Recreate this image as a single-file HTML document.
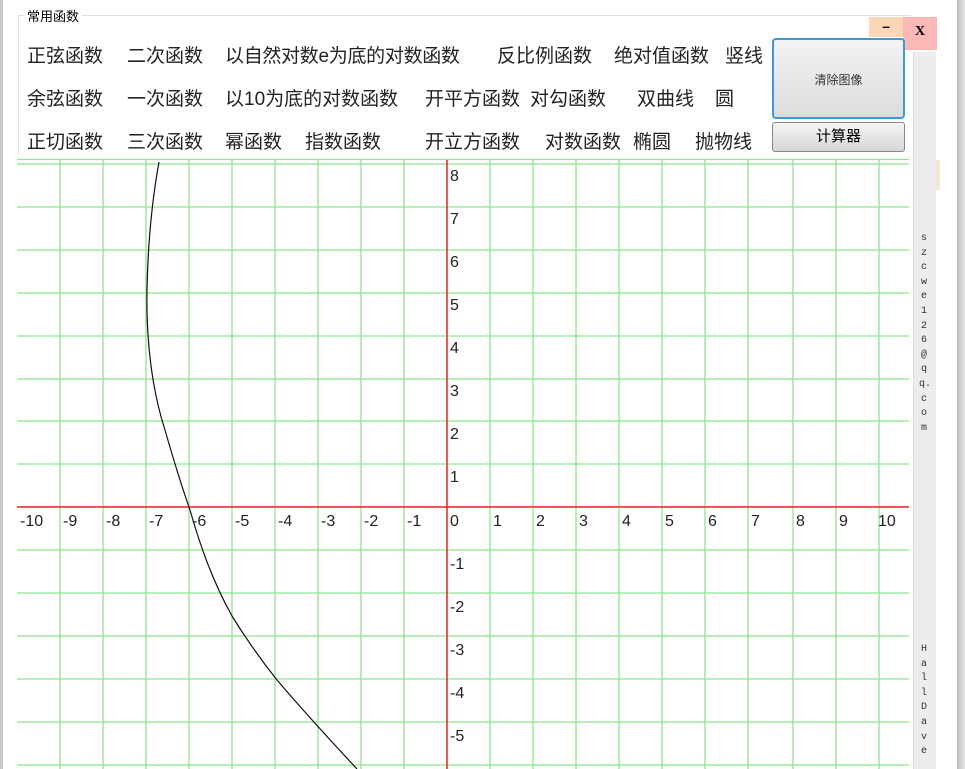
<!DOCTYPE html>
<html><head><meta charset="utf-8"><style>
body{margin:0;width:965px;height:769px;overflow:hidden;background:#fff;position:relative;font-family:"Liberation Sans","Noto Sans CJK SC",sans-serif}
.a{position:absolute}
.t{position:absolute;font-size:19px;color:#222;white-space:nowrap;font-family:"Liberation Sans","Noto Sans CJK SC",sans-serif;line-height:22px}
</style></head><body>
<div class="a" style="left:0;top:0;width:3px;height:769px;background:#c8c8c8"></div>
<div class="a" style="left:957px;top:0;width:8px;height:769px;background:linear-gradient(90deg,#bbb,#e8e8e8)"></div>
<div class="a" style="left:18px;top:15px;width:893px;height:1px;background:#e2e2e2"></div>
<div class="a" style="left:18px;top:15px;width:1px;height:140px;background:#e2e2e2"></div>
<div class="a" style="left:24px;top:6px;font-size:13px;background:#fff;padding:0 3px;font-family:'Noto Sans CJK SC',sans-serif">常用函数</div>
<div class="a" style="left:869px;top:17px;width:34px;height:20px;background:#fcd7b6;text-align:center;font-size:14px;font-weight:bold;line-height:18px">–</div>
<div class="a" style="left:903px;top:17px;width:34px;height:33px;background:#fbb8b4;text-align:center;font:bold 14px 'Liberation Serif',serif;line-height:30px">X</div>
<div class="a" style="left:913px;top:52px;width:22px;height:717px;background:#ededed;border-left:1px solid #ddd"></div>
<div class="a" style="left:936px;top:160px;width:4px;height:30px;background:#f3e6d0"></div>
<div class="a" style="left:919px;top:232px;width:10px;font:10px 'Liberation Mono',monospace;line-height:14.6px;color:#333;text-align:center;word-break:break-all">szcwe126@qq.com</div>
<div class="a" style="left:919px;top:643px;width:10px;font:10px 'Liberation Mono',monospace;line-height:14.6px;color:#333;text-align:center;word-break:break-all">Hall Dave</div>
<div class="a" style="left:772px;top:38px;width:129px;height:77px;border:2px solid #3c9ad8;border-radius:4px;background:linear-gradient(#f3f3f3,#dcdcdc);text-align:center;font-size:12px;line-height:80px;font-family:'Noto Sans CJK SC',sans-serif;color:#333">清除图像</div>
<div class="a" style="left:772px;top:122px;width:131px;height:28px;border:1px solid #888;border-radius:3px;background:linear-gradient(#f6f6f6,#d6d6d6);text-align:center;font-size:15px;line-height:26px;font-family:'Noto Sans CJK SC',sans-serif">计算器</div>

<div class="t" style="left:27px;top:46px">正弦函数</div>
<div class="t" style="left:127px;top:46px">二次函数</div>
<div class="t" style="left:225px;top:46px;letter-spacing:-0.3px">以自然对数e为底的对数函数</div>
<div class="t" style="left:497px;top:46px">反比例函数</div>
<div class="t" style="left:614px;top:46px">绝对值函数</div>
<div class="t" style="left:725px;top:46px">竖线</div>

<div class="t" style="left:27px;top:89px">余弦函数</div>
<div class="t" style="left:127px;top:89px">一次函数</div>
<div class="t" style="left:225px;top:89px">以10为底的对数函数</div>
<div class="t" style="left:425px;top:89px">开平方函数</div>
<div class="t" style="left:530px;top:89px">对勾函数</div>
<div class="t" style="left:637px;top:89px">双曲线</div>
<div class="t" style="left:715px;top:89px">圆</div>

<div class="t" style="left:27px;top:132px">正切函数</div>
<div class="t" style="left:127px;top:132px">三次函数</div>
<div class="t" style="left:225px;top:132px">幂函数</div>
<div class="t" style="left:305px;top:132px">指数函数</div>
<div class="t" style="left:425px;top:132px">开立方函数</div>
<div class="t" style="left:545px;top:132px">对数函数</div>
<div class="t" style="left:633px;top:132px">椭圆</div>
<div class="t" style="left:695px;top:132px">抛物线</div>

<svg class="a" style="left:0;top:0" width="965" height="769">
<g stroke="#8fe68f" stroke-width="1.3">
<line x1="17" y1="159.5" x2="909" y2="159.5"/>
<line x1="17" y1="164" x2="909" y2="164"/><line x1="17" y1="207" x2="909" y2="207"/><line x1="17" y1="250" x2="909" y2="250"/><line x1="17" y1="293" x2="909" y2="293"/><line x1="17" y1="336" x2="909" y2="336"/><line x1="17" y1="379" x2="909" y2="379"/><line x1="17" y1="421" x2="909" y2="421"/><line x1="17" y1="464" x2="909" y2="464"/><line x1="17" y1="550" x2="909" y2="550"/><line x1="17" y1="593" x2="909" y2="593"/><line x1="17" y1="636" x2="909" y2="636"/><line x1="17" y1="679" x2="909" y2="679"/><line x1="17" y1="722" x2="909" y2="722"/><line x1="17" y1="765" x2="909" y2="765"/>
<line x1="60" y1="160" x2="60" y2="769"/><line x1="103" y1="160" x2="103" y2="769"/><line x1="146" y1="160" x2="146" y2="769"/><line x1="189" y1="160" x2="189" y2="769"/><line x1="232" y1="160" x2="232" y2="769"/><line x1="275" y1="160" x2="275" y2="769"/><line x1="318" y1="160" x2="318" y2="769"/><line x1="361" y1="160" x2="361" y2="769"/><line x1="404" y1="160" x2="404" y2="769"/><line x1="490" y1="160" x2="490" y2="769"/><line x1="533" y1="160" x2="533" y2="769"/><line x1="576" y1="160" x2="576" y2="769"/><line x1="619" y1="160" x2="619" y2="769"/><line x1="662" y1="160" x2="662" y2="769"/><line x1="705" y1="160" x2="705" y2="769"/><line x1="748" y1="160" x2="748" y2="769"/><line x1="793" y1="160" x2="793" y2="769"/><line x1="836" y1="160" x2="836" y2="769"/><line x1="879" y1="160" x2="879" y2="769"/>
</g>
<line x1="17" y1="507" x2="909" y2="507" stroke="#e82020" stroke-width="1.5"/>
<line x1="447" y1="160" x2="447" y2="769" stroke="#e82020" stroke-width="1.5"/>
<path d="M159,162 C153,195 148,240 147,290 C146,340 152,390 165,430 C175,465 183,490 190,510 C200,545 212,580 232,616 C250,645 265,665 277,680 C300,707 330,740 357,769" fill="none" stroke="#111" stroke-width="1.2"/>
<g font-family="Liberation Sans,sans-serif" font-size="16" fill="#222">
<text x="20" y="526">-10</text><text x="63" y="526">-9</text><text x="106" y="526">-8</text><text x="149" y="526">-7</text><text x="192" y="526">-6</text><text x="235" y="526">-5</text><text x="278" y="526">-4</text><text x="321" y="526">-3</text><text x="364" y="526">-2</text><text x="407" y="526">-1</text><text x="450" y="526">0</text><text x="493" y="526">1</text><text x="536" y="526">2</text><text x="579" y="526">3</text><text x="622" y="526">4</text><text x="665" y="526">5</text><text x="708" y="526">6</text><text x="751" y="526">7</text><text x="796" y="526">8</text><text x="839" y="526">9</text><text x="878" y="526">10</text>
<text x="450" y="181">8</text><text x="450" y="224">7</text><text x="450" y="267">6</text><text x="450" y="310">5</text><text x="450" y="353">4</text><text x="450" y="396">3</text><text x="450" y="439">2</text><text x="450" y="482">1</text>
<text x="450" y="569">-1</text><text x="450" y="612">-2</text><text x="450" y="655">-3</text><text x="450" y="698">-4</text><text x="450" y="741">-5</text>
</g>
</svg>
</body></html>
